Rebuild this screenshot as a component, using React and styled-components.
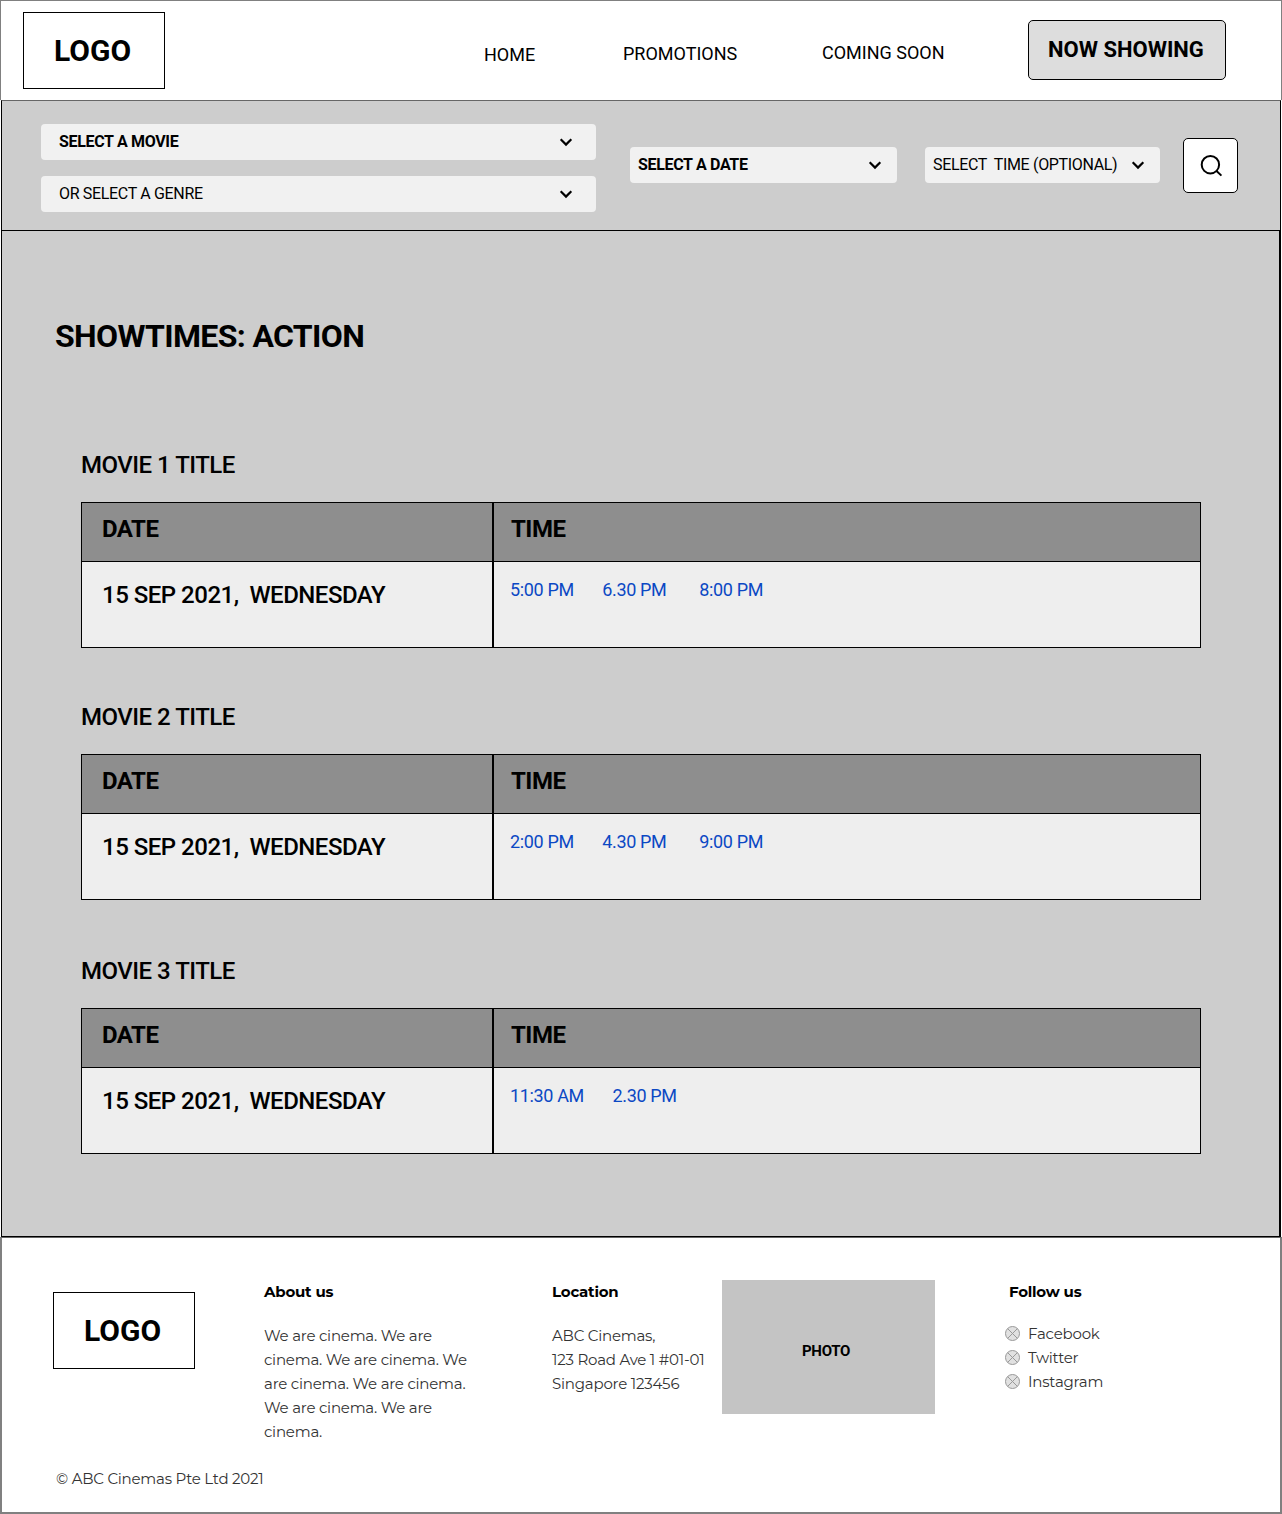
import React from "react";
import styled, { createGlobalStyle } from "styled-components";

const GlobalStyle = createGlobalStyle`
  * { box-sizing: border-box; }
  body { margin: 0; background: #fff; color: #000; font-family: Roboto, "Liberation Sans", sans-serif; }
`;

const Page = styled.div`
  width: 1282px;
  height: 1514px;
  display: flex;
  flex-direction: column;
`;

const Header = styled.header`
  height: 100px;
  display: flex;
  align-items: flex-start;
  border: 1px solid #808080;
  border-bottom: 0;
  background: #fff;
`;

const Logo = styled.div`
  flex: none;
  width: 142px;
  height: 77px;
  border: 1px solid #000;
  padding-left: 30px;
  font-size: 30px;
  font-weight: 700;
  line-height: 75px;
`;

const HeaderLogo = styled(Logo)`
  margin: 11px 0 0 22px;
`;

const Nav = styled.nav`
  display: flex;
  margin-left: 319px;
`;

const NavLink = styled.a`
  width: ${(p) => p.$width}px;
  margin-top: ${(p) => p.$top}px;
  font-size: 18px;
  line-height: 24px;
  white-space: nowrap;
`;

const NowShowing = styled.button`
  width: 198px;
  height: 60px;
  margin-top: 19px;
  padding: 0 0 0 19px;
  border: 1px solid #000;
  border-radius: 5px;
  background: #ddd;
  color: #000;
  font: 700 22px/56px Roboto, "Liberation Sans", sans-serif;
  text-align: left;
  white-space: nowrap;
`;

const Select = styled.div`
  width: ${(p) => p.$width}px;
  height: 36px;
  margin-right: ${(p) => p.$gap || 0}px;
  padding: 0 ${(p) => p.$end}px 1px ${(p) => p.$start}px;
  display: flex;
  align-items: center;
  justify-content: space-between;
  border-radius: 4px;
  background: #f1f1f1;
  font-size: 16px;
  font-weight: ${(p) => (p.$strong ? 700 : 400)};
  letter-spacing: -0.33px;
  white-space: pre;

  svg { flex: none; margin-top: 1px; }
`;

const FilterBar = styled.section`
  height: 131px;
  margin: 0 1px;
  display: flex;
  align-items: center;
  border: 1px solid #000;
  border-top-color: #666;
  background: #cdcdcd;
  padding-left: 39px;

  > ${Select} { margin-bottom: 1px; }
`;

const FilterStack = styled.div`
  display: flex;
  flex-direction: column;
  gap: 16px;
  margin: 5px 34px 0 0;
`;

const SearchButton = styled.button`
  width: 55px;
  height: 55px;
  padding: 0;
  display: grid;
  place-items: center;
  border: 1px solid #000;
  border-radius: 5px;
  background: #fff;
`;

const Main = styled.main`
  height: 1006px;
  margin: 0 1px;
  padding: 85px 78px 0 79px;
  border: solid #000;
  border-width: 0 2px 1px 1px;
  background: #cdcdcd;
`;

const PageTitle = styled.h1`
  margin: 0 0 94px -26px;
  font-size: 32px;
  line-height: 40px;
  font-weight: 700;
  letter-spacing: -0.64px;
`;

const Movie = styled.section`
  margin-bottom: ${(p) => p.$gap}px;
`;

const MovieTitle = styled.h2`
  margin: 0 0 22px;
  font-size: 24px;
  line-height: 30px;
  font-weight: 500;
  letter-spacing: -0.5px;
`;

const Table = styled.div`
  width: 1120px;
  height: 146px;
  display: grid;
  grid-template-columns: 410px 1fr;
  grid-template-rows: 59px 1fr;
  border: 1px solid #000;
`;

const HeadCell = styled.div`
  padding: ${(p) => (p.$divided ? "11px 0 0 17px" : "11px 0 0 20px")};
  border-left: ${(p) => (p.$divided ? "2px solid #000" : "0")};
  border-bottom: 1px solid #000;
  background: #8e8e8e;
  font-size: 24px;
  line-height: 30px;
  font-weight: 700;
  letter-spacing: -0.5px;
`;

const DateCell = styled.div`
  padding: 18px 0 0 20px;
  background: #eee;
  font-size: 24px;
  line-height: 30px;
  font-weight: 500;
  letter-spacing: -0.5px;
  white-space: pre;
`;

const TimesCell = styled.div`
  display: flex;
  padding: 16px 0 0 16px;
  border-left: 2px solid #000;
  background: #eee;
`;

const TimeLink = styled.a`
  width: ${(p) => p.$width}px;
  color: #0b48c4;
  font-size: 18px;
  line-height: 24px;
  letter-spacing: -0.35px;
  white-space: nowrap;
`;

const Footer = styled.footer`
  height: 277px;
  border: 2px solid #808080;
  border-top: 1px solid #666;
  background: #fff;
  font-family: Montserrat, Inter, sans-serif;
  color: #333;
`;

const FooterRow = styled.div`
  height: 226px;
  display: flex;
  align-items: flex-start;
  padding: 42px 0 0 51px;
`;

const FooterLogo = styled(Logo)`
  margin: 12px 69px 0 0;
  font-family: Roboto, "Liberation Sans", sans-serif;
  color: #000;
`;

const FooterColumn = styled.div`
  width: ${(p) => p.$width}px;
`;

const FooterHeading = styled.h3`
  margin: 0 0 ${(p) => p.$gap ?? 20}px ${(p) => p.$indent || 0}px;
  color: #000;
  font-size: 15px;
  line-height: 24px;
  font-weight: 700;
  letter-spacing: -0.22px;
`;

const TextLine = styled.div`
  font-size: 15px;
  line-height: 24px;
  font-weight: 400;
  letter-spacing: -0.22px;
  white-space: nowrap;
`;

const Photo = styled.div`
  width: 213px;
  height: 134px;
  margin-right: 70px;
  padding: 8px 5px 0 0;
  display: grid;
  place-items: center;
  background: #c4c4c4;
  color: #000;
  font: 700 15px/24px Roboto, "Liberation Sans", sans-serif;
  letter-spacing: -0.3px;
`;

const SocialLink = styled.div`
  display: flex;
  align-items: center;
  gap: 8px;

  svg { flex: none; margin-top: -1px; }
`;

const Copyright = styled(TextLine)`
  padding: 3px 0 0 54px;
`;

const ChevronIcon = () => (
  <svg width="24" height="24" viewBox="0 0 24 24" fill="none" stroke="#000" strokeWidth="2.2">
    <path d="M6.7 9.3L12 14.6L17.3 9.3" />
  </svg>
);

const SearchIcon = () => (
  <svg width="24" height="24" viewBox="0 0 24 24" fill="none" stroke="#000" strokeWidth="2">
    <circle cx="11.4" cy="10.7" r="8.7" />
    <path d="M17.3 16.7L22.4 21.6" />
  </svg>
);

const SocialIcon = () => (
  <svg width="15" height="15" viewBox="0 0 15 15" fill="none" stroke="#999" strokeWidth="1">
    <circle cx="7.5" cy="7.5" r="7" fill="#e1e1e1" />
    <path d="M2.6 2.6L12.4 12.4M12.4 2.6L2.6 12.4" />
  </svg>
);

const movies = [
  { title: "MOVIE 1 TITLE", gap: 54, times: [["5:00 PM", 92.3], ["6.30 PM", 97], ["8:00 PM", 80]] },
  { title: "MOVIE 2 TITLE", gap: 56, times: [["2:00 PM", 92.3], ["4.30 PM", 97], ["9:00 PM", 80]] },
  { title: "MOVIE 3 TITLE", gap: 0, times: [["11:30 AM", 102.5], ["2.30 PM", 80]] },
];

const about = [
  "We are cinema. We are",
  "cinema. We are cinema. We",
  "are cinema. We are cinema.",
  "We are cinema. We are",
  "cinema.",
];

const address = ["ABC Cinemas,", "123 Road Ave 1 #01-01", "Singapore 123456"];

const socials = ["Facebook", "Twitter", "Instagram"];

export default function App() {
  return (
    <Page>
      <GlobalStyle />
      <Header>
        <HeaderLogo>LOGO</HeaderLogo>
        <Nav>
          <NavLink $width={139} $top={42}>HOME</NavLink>
          <NavLink $width={199} $top={41}>PROMOTIONS</NavLink>
          <NavLink $width={206} $top={40}>COMING SOON</NavLink>
        </Nav>
        <NowShowing>NOW SHOWING</NowShowing>
      </Header>
      <FilterBar>
        <FilterStack>
          <Select $width={555} $start={18} $end={18} $strong>SELECT A MOVIE<ChevronIcon /></Select>
          <Select $width={555} $start={18} $end={18}>OR SELECT A GENRE<ChevronIcon /></Select>
        </FilterStack>
        <Select $width={267} $start={8} $end={10} $gap={28} $strong>SELECT A DATE<ChevronIcon /></Select>
        <Select $width={235} $start={8} $end={10} $gap={23}>{"SELECT  TIME (OPTIONAL)"}<ChevronIcon /></Select>
        <SearchButton aria-label="Search"><SearchIcon /></SearchButton>
      </FilterBar>
      <Main>
        <PageTitle>SHOWTIMES: ACTION</PageTitle>
        {movies.map((m) => (
          <Movie key={m.title} $gap={m.gap}>
            <MovieTitle>{m.title}</MovieTitle>
            <Table>
              <HeadCell>DATE</HeadCell>
              <HeadCell $divided>TIME</HeadCell>
              <DateCell>{"15 SEP 2021,  WEDNESDAY"}</DateCell>
              <TimesCell>
                {m.times.map(([t, w]) => <TimeLink key={t} $width={w}>{t}</TimeLink>)}
              </TimesCell>
            </Table>
          </Movie>
        ))}
      </Main>
      <Footer>
        <FooterRow>
          <FooterLogo>LOGO</FooterLogo>
          <FooterColumn $width={288}>
            <FooterHeading>About us</FooterHeading>
            {about.map((t, i) => <TextLine key={i}>{t}</TextLine>)}
          </FooterColumn>
          <FooterColumn $width={170}>
            <FooterHeading>Location</FooterHeading>
            {address.map((t) => <TextLine key={t}>{t}</TextLine>)}
          </FooterColumn>
          <Photo>PHOTO</Photo>
          <FooterColumn $width={200}>
            <FooterHeading $gap={18} $indent={4}>Follow us</FooterHeading>
            {socials.map((t) => (
              <SocialLink key={t}><SocialIcon /><TextLine>{t}</TextLine></SocialLink>
            ))}
          </FooterColumn>
        </FooterRow>
        <Copyright>© ABC Cinemas Pte Ltd 2021</Copyright>
      </Footer>
    </Page>
  );
}
